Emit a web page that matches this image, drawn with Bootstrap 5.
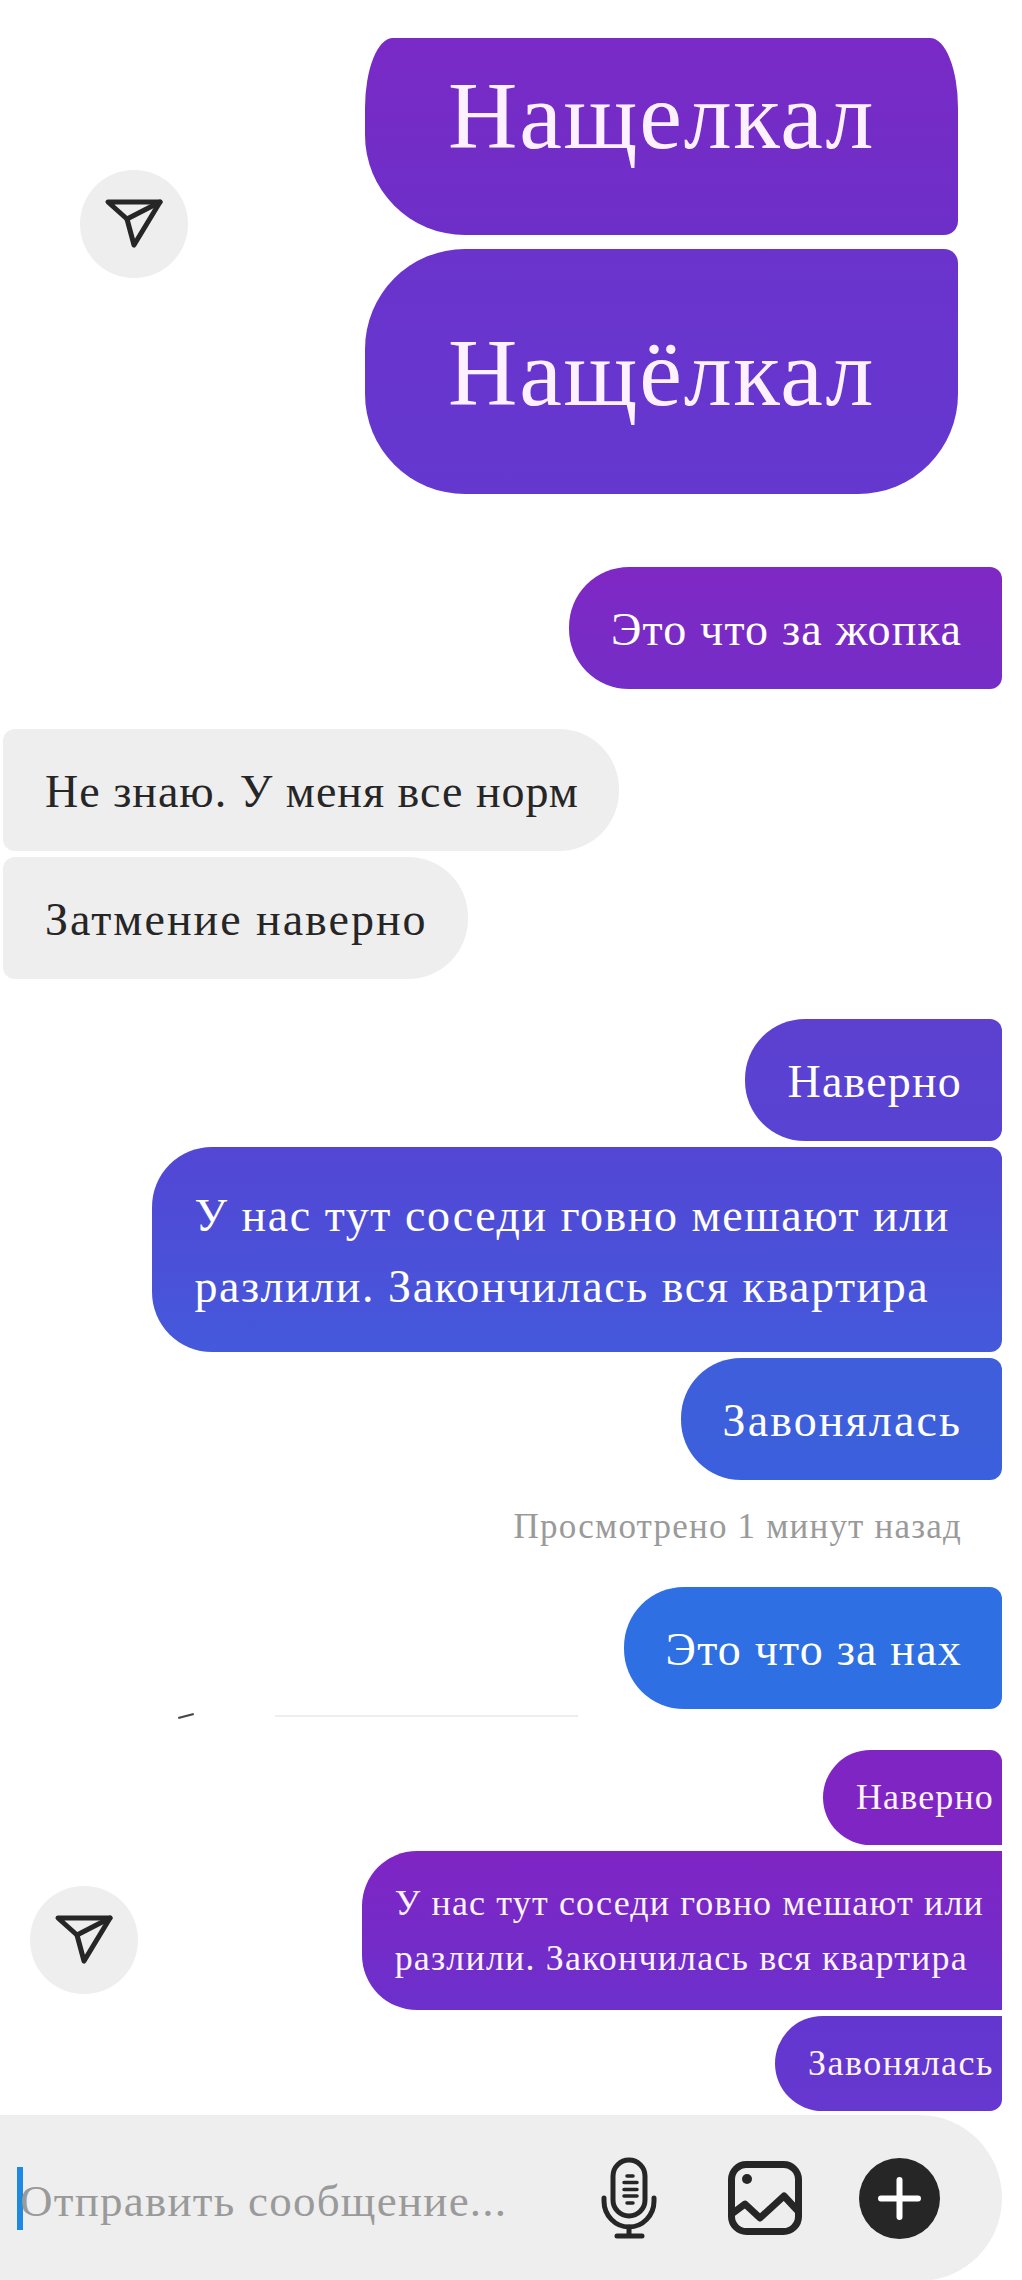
<!DOCTYPE html>
<html lang="ru">
<head>
  <meta charset="UTF-8" />
  <meta name="viewport" content="width=device-width, initial-scale=1" />
  <title>Чат</title>
  <link href="https://cdn.jsdelivr.net/npm/bootstrap@5.3.2/dist/css/bootstrap.min.css" rel="stylesheet">
  <style>
    body {
      font-family: "Liberation Serif", "DejaVu Serif", serif;
      background: #fff;
      height: 2280px;
      overflow: hidden;
      color: #262626;
    }

    .msg {
      height: 122px;
      padding: 2px 40px 0 42px;
      font-size: 46px;
      letter-spacing: 1.2px;
      line-height: 71px;
      white-space: nowrap;
      border-radius: 60px;
      color: #fff;
    }
    .out { border-top-right-radius: 12px; border-bottom-right-radius: 12px; }
    .in { background: #eee; color: #262626; border-top-left-radius: 12px; border-bottom-left-radius: 12px; }
    .in-1 { letter-spacing: 1px; }
    .in-2 { letter-spacing: 2px; }

    .send-btn { width: 108px; height: 108px; background: #eee; }
    .send-top { margin-top: 132px; }
    .send-low { margin-top: 18px; }

    /* pasted picture at the top */
    .top-shot { padding: 38px 64px 0 80px; height: 494px; }
    .big {
      width: 593px;
      font-size: 96px;
      letter-spacing: 1.8px;
      color: #fdf1ff;
    }
    .big-1 {
      height: 197px;
      padding: 0 0 42px 83px;
      border-radius: 28px 28px 14px 100px / 70px 70px 14px 100px;
      background: linear-gradient(#7a2ac6, #6d2fc8);
    }
    .big-2 {
      height: 245px;
      margin-top: 14px;
      padding: 2px 0 0 83px;
      border-radius: 100px 14px 100px 100px;
      background: linear-gradient(#6a33cc, #6438cf);
    }

    .chat-rows { padding: 0 20px 0 3px; }
    .mt-73 { margin-top: 73px; }
    .mt-40 { margin-top: 40px; }
    .mt-6 { margin-top: 6px; }

    .c-1 { background: linear-gradient(#7f28c4, #752dc7); }
    .c-2 { background: linear-gradient(#5d40d0, #5843d3); }
    .c-3 { background: linear-gradient(#5346d5, #4459db); height: 205px; padding-right: 52px; letter-spacing: 1.55px; }
    .c-4 { background: linear-gradient(#3f5edb, #3b60dd); letter-spacing: 2.1px; }
    .c-5 { background: #2e6fe3; }

    .seen { color: #9a9a9a; font-size: 35px; letter-spacing: 1.2px; line-height: 40px; padding-right: 40px; margin-top: 27px; }

    .smudge { height: 5px; margin-top: 4px; padding-left: 178px; }
    .smudge-line { width: 303px; height: 2px; background: #eee; margin-left: 81px; }
    .smudge-mark { width: 16px; height: 2px; background: #444; transform: rotate(-15deg); }

    /* second pasted picture */
    .low-shot { padding: 32px 20px 0 30px; }
    .low-stack { width: 639px; }
    .small-msg { font-size: 36px; letter-spacing: 1.15px; padding: 0 8px 0 33px; color: #fdf3ff; line-height: 55px; }
    .s-1 { height: 95px; border-radius: 48px 12px 0 48px; background: #7f25c4; }
    .s-2 { height: 159px; padding-right: 18px; border-radius: 55px 0 0 55px; background: linear-gradient(#7f25c4, #6c30cc); }
    .s-3 { height: 95px; letter-spacing: 1.5px; border-radius: 48px 0 12px 48px; background: linear-gradient(#6236cf, #6638d0); }

    .compose {
      height: 166px;
      margin-top: 4px;
      margin-right: 20px;
      background: #eee;
      border-radius: 0 85px 85px 0;
      padding: 0 62px 0 17px;
    }
    .caret { width: 6px; height: 63px; background: #1e88e5; margin-right: -3px; }
    .hint { font-size: 45px; letter-spacing: 1.25px; padding-top: 7px; color: #9a9a9a; white-space: nowrap; }
    .mic-icon { margin-right: 69px; }
    .pic-icon { margin-right: 57px; }
  </style>
</head>
<body>

<div class="top-shot d-flex justify-content-between align-items-start">
  <div class="send-btn send-top rounded-circle d-flex align-items-center justify-content-center">
    <svg width="60" height="52" viewBox="0 0 60 52" fill="none" stroke="#262626" stroke-width="5" stroke-linejoin="round" stroke-linecap="round">
      <path d="M4 4H56L30 47 23 21Z" /><path d="M23 21 56 4" />
    </svg>
  </div>
  <div>
    <div class="msg big big-1 d-flex align-items-center">Нащелкал</div>
    <div class="msg big big-2 d-flex align-items-center">Нащёлкал</div>
  </div>
</div>

<div class="chat-rows">
  <div class="d-flex justify-content-end mt-73"><div class="msg out c-1 d-flex align-items-center">Это что за жопка</div></div>
  <div class="d-flex mt-40"><div class="msg in in-1 d-flex align-items-center">Не знаю. У меня все норм</div></div>
  <div class="d-flex mt-6"><div class="msg in in-2 d-flex align-items-center">Затмение наверно</div></div>
  <div class="d-flex justify-content-end mt-40"><div class="msg out c-2 d-flex align-items-center">Наверно</div></div>
  <div class="d-flex justify-content-end mt-6"><div class="msg out c-3 d-flex align-items-center">У нас тут соседи говно мешают или<br>разлили. Закончилась вся квартира</div></div>
  <div class="d-flex justify-content-end mt-6"><div class="msg out c-4 d-flex align-items-center">Завонялась</div></div>
  <div class="seen text-end">Просмотрено 1 минут назад</div>
  <div class="d-flex justify-content-end mt-40"><div class="msg out c-5 d-flex align-items-center">Это что за нах</div></div>
</div>

<div class="smudge d-flex align-items-center">
  <div class="smudge-mark"></div>
  <div class="smudge-line"></div>
</div>

<div class="low-shot d-flex justify-content-between align-items-center">
  <div class="send-btn send-low rounded-circle d-flex align-items-center justify-content-center">
    <svg width="60" height="52" viewBox="0 0 60 52" fill="none" stroke="#262626" stroke-width="5" stroke-linejoin="round" stroke-linecap="round">
      <path d="M4 4H56L30 47 23 21Z" /><path d="M23 21 56 4" />
    </svg>
  </div>
  <div class="low-stack d-flex flex-column align-items-end">
    <div class="msg small-msg s-1 d-flex align-items-center">Наверно</div>
    <div class="msg small-msg s-2 d-flex align-items-center mt-6">У нас тут соседи говно мешают или<br>разлили. Закончилась вся квартира</div>
    <div class="msg small-msg s-3 d-flex align-items-center mt-6">Завонялась</div>
  </div>
</div>

<div class="compose d-flex align-items-center">
  <div class="caret flex-shrink-0"></div>
  <div class="hint flex-grow-1">Отправить сообщение...</div>
  <div class="d-flex align-items-center">
    <svg class="mic-icon" width="58" height="82" viewBox="0 0 58 82" fill="none" stroke="#262626" stroke-width="5" stroke-linecap="round">
      <rect x="12" y="3" width="32" height="56" rx="16" />
      <path d="M3 41v3a25 26 0 0 0 50 0v-3" />
      <path d="M28 70v9M16 79h25" />
      <path stroke-width="3.5" d="M26 19h6M23 25.500h13M23 32.500h13M23 39h13M26 46h6" />
    </svg>
    <svg class="pic-icon" width="74" height="74" viewBox="0 0 74 74" fill="none" stroke="#262626" stroke-width="7" stroke-linejoin="round" stroke-linecap="round">
      <rect x="3.500" y="3.500" width="67" height="67" rx="15" />
      <circle cx="19" cy="18" r="5" fill="#262626" stroke="none" />
      <path d="M5 52 17 43 32 57 56 35 70 50" />
    </svg>
    <svg width="81" height="81" viewBox="0 0 81 81">
      <circle cx="40.500" cy="40.500" r="40.500" fill="#262626" />
      <path d="M40.500 22v37M22 40.500h37" stroke="#fff" stroke-width="6" stroke-linecap="round" />
    </svg>
  </div>
</div>

<script src="https://cdn.jsdelivr.net/npm/bootstrap@5.3.2/dist/js/bootstrap.bundle.min.js"></script>
</body>
</html>
